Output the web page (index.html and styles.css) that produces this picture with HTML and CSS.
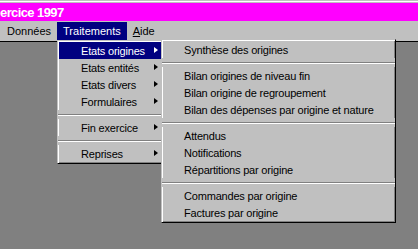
FILE: index.html
```html
<!doctype html>
<html>
<head>
<meta charset="UTF-8">
<title>Exercice 1997</title>
<link rel="stylesheet" href="styles.css">
</head>
<body>
<div class="window">
	<div class="edge"></div>
	<div class="titlebar">ercice 1997</div>
	<ul class="menubar">
		<li class="menu">Données</li>
		<li class="menu open">Traitements
			<ul class="dropdown">
				<li class="item sub active">Etats origines<span class="arrow"></span>
					<ul class="dropdown submenu">
						<li class="item">Synthèse des origines</li>
						<li class="sep"></li>
						<li class="item">Bilan origines de niveau fin</li>
						<li class="item">Bilan origine de regroupement</li>
						<li class="item">Bilan des dépenses par origine et nature</li>
						<li class="sep"></li>
						<li class="item">Attendus</li>
						<li class="item">Notifications</li>
						<li class="item">Répartitions par origine</li>
						<li class="sep"></li>
						<li class="item">Commandes par origine</li>
						<li class="item">Factures par origine</li>
					</ul>
				</li>
				<li class="item sub">Etats entités<span class="arrow"></span></li>
				<li class="item sub">Etats divers<span class="arrow"></span></li>
				<li class="item sub">Formulaires<span class="arrow"></span></li>
				<li class="sep"></li>
				<li class="item sub">Fin exercice<span class="arrow"></span></li>
				<li class="sep"></li>
				<li class="item sub">Reprises<span class="arrow"></span></li>
			</ul>
		</li>
		<li class="menu"><u>A</u>ide</li>
	</ul>
</div>
<div class="workspace"></div>
</body>
</html>
```

FILE: styles.css
```css
html,body{margin:0;height:100%}
body{
	display:flex;
	flex-direction:column;
	background:#808080;
	font-family:"Liberation Sans",Arial,sans-serif;
	font-size:11px;
	color:#000;
	overflow:hidden;
}
ul{list-style:none;margin:0;padding:0}

.window{
	background:#c0c0c0;
	border-top:1px solid #c0c0c0;
}
.edge{height:1px;background:#fff;margin-bottom:1px}
.titlebar{
	height:18px;
	line-height:19px;
	background:#ff00ff;
	color:#fff;
	font-weight:bold;
	font-size:13px;
	letter-spacing:-0.6px;
	white-space:nowrap;
}

.menubar{
	display:flex;
	padding:1px 1px;
	height:18px;
}
.menu{
	position:relative;
	padding:0 6px;
	line-height:18px;
	white-space:nowrap;
}
.menu.open{background:#000080;color:#fff}

.dropdown{
	position:absolute;
	top:100%;
	left:0;
	width:102px;
	padding:1px;
	background:#c0c0c0;
	color:#000;
	letter-spacing:-0.2px;
	border:1px solid;
	border-color:#c0c0c0 #000 #000 #c0c0c0;
	box-shadow:inset 1px 1px #fff,inset -1px -1px #808080;
	z-index:1;
}
.item{
	position:relative;
	height:17px;
	line-height:18px;
	padding-left:22px;
	white-space:nowrap;
}
.item.active{background:#000080;color:#fff}
.arrow{
	position:absolute;
	right:3px;
	top:5px;
	width:0;height:0;
	border-left:4px solid currentColor;
	border-top:3.5px solid transparent;
	border-bottom:3.5px solid transparent;
}
.sep{
	height:9px;
	margin:0 -1px;
	background:linear-gradient(#c0c0c0 4px,#808080 4px,#808080 5px,#fff 5px,#fff 6px,#c0c0c0 6px);
}

.submenu{
	top:-3px;
	left:100%;
	width:231px;
	z-index:2;
}
.submenu .item{padding-left:21px}

.workspace{
	flex:1;
	border-top:1px solid #000;
}
```
